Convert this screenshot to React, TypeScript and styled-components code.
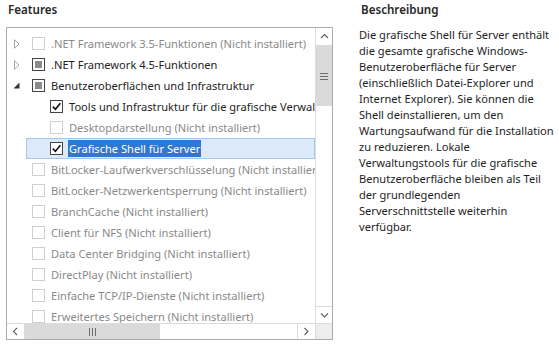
import React from 'react';
import styled, { createGlobalStyle } from 'styled-components';

const GlobalStyle = createGlobalStyle`
	body {
		margin: 0;
		background: #ffffff;
		font-family: 'Noto Sans', 'Open Sans', sans-serif;
		font-size: 11.1px;
		color: #1e1e1e;
	}
`;

type Check = 'none' | 'partial' | 'checked';
type Expander = 'none' | 'collapsed' | 'expanded';

interface Feature {
	level: number;
	expander: Expander;
	check: Check;
	muted?: boolean;
	selected?: boolean;
	label: string;
}

const features: Feature[] = [
	{ level: 0, expander: 'collapsed', check: 'none', muted: true, label: '.NET Framework 3.5-Funktionen (Nicht installiert)' },
	{ level: 0, expander: 'collapsed', check: 'partial', label: '.NET Framework 4.5-Funktionen' },
	{ level: 0, expander: 'expanded', check: 'partial', label: 'Benutzeroberflächen und Infrastruktur' },
	{ level: 1, expander: 'none', check: 'checked', label: 'Tools und Infrastruktur für die grafische Verwaltung' },
	{ level: 1, expander: 'none', check: 'none', muted: true, label: 'Desktopdarstellung (Nicht installiert)' },
	{ level: 1, expander: 'none', check: 'checked', selected: true, label: 'Grafische Shell für Server' },
	{ level: 0, expander: 'none', check: 'none', muted: true, label: 'BitLocker-Laufwerkverschlüsselung (Nicht installiert)' },
	{ level: 0, expander: 'none', check: 'none', muted: true, label: 'BitLocker-Netzwerkentsperrung (Nicht installiert)' },
	{ level: 0, expander: 'none', check: 'none', muted: true, label: 'BranchCache (Nicht installiert)' },
	{ level: 0, expander: 'none', check: 'none', muted: true, label: 'Client für NFS (Nicht installiert)' },
	{ level: 0, expander: 'none', check: 'none', muted: true, label: 'Data Center Bridging (Nicht installiert)' },
	{ level: 0, expander: 'none', check: 'none', muted: true, label: 'DirectPlay (Nicht installiert)' },
	{ level: 0, expander: 'none', check: 'none', muted: true, label: 'Einfache TCP/IP-Dienste (Nicht installiert)' },
	{ level: 0, expander: 'none', check: 'none', muted: true, label: 'Erweitertes Speichern (Nicht installiert)' },
];

const description = [
	'Die grafische Shell für Server enthält',
	'die gesamte grafische Windows-',
	'Benutzeroberfläche für Server',
	'(einschließlich Datei-Explorer und',
	'Internet Explorer). Sie können die',
	'Shell deinstallieren, um den',
	'Wartungsaufwand für die Installation',
	'zu reduzieren. Lokale',
	'Verwaltungstools für die grafische',
	'Benutzeroberfläche bleiben als Teil',
	'der grundlegenden',
	'Serverschnittstelle weiterhin',
	'verfügbar.',
];

const Page = styled.div`
	display: flex;
	padding-left: 6px;
`;

const FeaturesPane = styled.div`
	display: flex;
	flex-direction: column;
	width: 327px;
`;

const PaneTitle = styled.div`
	height: 27px;
	line-height: 20px;
	padding-left: 2px;
	font-size: 11.6px;
	font-weight: 600;
	color: #262626;
`;

const ListBox = styled.div`
	display: grid;
	grid-template-columns: 1fr 17px;
	grid-template-rows: 295px 16px;
	height: 311px;
	border: 1px solid #acacac;
	background: #ffffff;
`;

const Viewport = styled.div`
	overflow: hidden;
	padding-top: 5px;
`;

const Row = styled.div`
	display: flex;
	align-items: center;
	height: 21px;
	white-space: nowrap;
`;

const ExpanderCell = styled.div`
	display: flex;
	align-items: center;
	justify-content: center;
	flex: 0 0 19px;
	height: 21px;
`;

const RowBody = styled.div<{ $selected?: boolean; $level: number }>`
	display: flex;
	align-items: center;
	flex: 1;
	height: 21px;
	box-sizing: border-box;
	padding-left: ${(p) => 5 + p.$level * 18}px;
	border: 1px solid ${(p) => (p.$selected ? '#a5c8ed' : 'transparent')};
	background: ${(p) => (p.$selected ? '#dbe9f9' : 'transparent')};
`;

const Box = styled.div<{ $muted?: boolean }>`
	display: flex;
	align-items: center;
	justify-content: center;
	box-sizing: border-box;
	width: 13px;
	height: 13px;
	flex: 0 0 13px;
	border: 1px solid ${(p) => (p.$muted ? '#cfcfcf' : '#444444')};
	background: #ffffff;
`;

const PartialFill = styled.div`
	width: 7px;
	height: 7px;
	background: #8c8c8c;
`;

const Label = styled.span<{ $muted?: boolean; $selected?: boolean }>`
	margin-left: 5px;
	padding: 0 1px;
	line-height: 17px;
	color: ${(p) => (p.$selected ? '#ffffff' : p.$muted ? '#8a8a8a' : '#1e1e1e')};
	background: ${(p) => (p.$selected ? '#2f78d0' : 'transparent')};
`;

const VScroll = styled.div`
	display: flex;
	flex-direction: column;
	border-left: 1px solid #dcdcdc;
`;

const HScroll = styled.div`
	display: flex;
	border-top: 1px solid #dcdcdc;
`;

const Corner = styled.div`
	border-top: 1px solid #dcdcdc;
	border-left: 1px solid #dcdcdc;
	background: #ededed;
`;

const ArrowButton = styled.div<{ $size: number; $vertical?: boolean }>`
	display: flex;
	align-items: center;
	justify-content: center;
	flex: 0 0 ${(p) => p.$size}px;
	box-sizing: border-box;
	${(p) => (p.$vertical ? 'border-bottom' : 'border-right')}: 1px solid #dcdcdc;
`;

const ArrowButtonEnd = styled(ArrowButton)`
	border: none;
	${(p) => (p.$vertical ? 'border-top' : 'border-left')}: 1px solid #dcdcdc;
`;

const Track = styled.div`
	flex: 1;
	display: flex;
	background: #ffffff;
`;

const Thumb = styled.div<{ $vertical?: boolean; $length: number }>`
	display: flex;
	align-items: center;
	justify-content: center;
	box-sizing: border-box;
	background: #dadada;
	${(p) => (p.$vertical ? `height: ${p.$length}px; width: 100%;` : `width: ${p.$length}px; height: 100%;`)}
`;

const DescriptionPane = styled.div`
	margin-left: 26px;
	width: 200px;
`;

const DescriptionLine = styled.div`
	line-height: 16px;
	white-space: nowrap;
	color: #1e1e1e;
`;

const Triangle: React.FC<{ kind: Expander }> = ({ kind }) => {
	if (kind === 'collapsed') {
		return (
			<svg width="6" height="10" viewBox="0 0 6 10">
				<path d="M0.5 0.8 L5 5 L0.5 9.2 Z" fill="none" stroke="#a6a6a6" strokeWidth="1" />
			</svg>
		);
	}
	if (kind === 'expanded') {
		return (
			<svg width="7" height="7" viewBox="0 0 7 7">
				<path d="M6.5 0.5 L6.5 6.5 L0.5 6.5 Z" fill="#333333" />
			</svg>
		);
	}
	return null;
};

const CheckMark = () => (
	<svg width="11" height="11" viewBox="0 0 11 11">
		<path d="M1.8 5.6 L4.4 8.2 L9.4 2.2" fill="none" stroke="#111111" strokeWidth="1.6" />
	</svg>
);

const Grip: React.FC<{ vertical?: boolean }> = ({ vertical }) =>
	vertical ? (
		<svg width="8" height="7" viewBox="0 0 8 7">
			<path d="M0 0.5 H8 M0 3.5 H8 M0 6.5 H8" stroke="#6e6e6e" strokeWidth="1" />
		</svg>
	) : (
		<svg width="7" height="8" viewBox="0 0 7 8">
			<path d="M0.5 0 V8 M3.5 0 V8 M6.5 0 V8" stroke="#6e6e6e" strokeWidth="1" />
		</svg>
	);

const Chevron: React.FC<{ dir: 'up' | 'down' | 'left' | 'right' }> = ({ dir }) => {
	const paths = {
		up: 'M1 5 L4.5 1.5 L8 5',
		down: 'M1 1.5 L4.5 5 L8 1.5',
		left: 'M5 1 L1.5 4.5 L5 8',
		right: 'M1.5 1 L5 4.5 L1.5 8',
	};
	const horizontal = dir === 'left' || dir === 'right';
	return (
		<svg width={horizontal ? 7 : 9} height={horizontal ? 9 : 7} viewBox={horizontal ? '0 0 7 9' : '0 0 9 7'}>
			<path d={paths[dir]} fill="none" stroke="#606060" strokeWidth="1.1" />
		</svg>
	);
};

const FeatureRow: React.FC<{ item: Feature }> = ({ item }) => (
	<Row>
		<ExpanderCell>
			<Triangle kind={item.expander} />
		</ExpanderCell>
		<RowBody $selected={item.selected} $level={item.level}>
			<Box $muted={item.muted}>
				{item.check === 'partial' && <PartialFill />}
				{item.check === 'checked' && <CheckMark />}
			</Box>
			<Label $muted={item.muted} $selected={item.selected}>
				{item.label}
			</Label>
		</RowBody>
	</Row>
);

export default function App() {
	return (
		<>
			<GlobalStyle />
			<Page>
				<FeaturesPane>
					<PaneTitle>Features</PaneTitle>
					<ListBox>
						<Viewport>
							{features.map((f) => (
								<FeatureRow key={f.label} item={f} />
							))}
						</Viewport>
						<VScroll>
							<ArrowButton $size={18} $vertical>
								<Chevron dir="up" />
							</ArrowButton>
							<Track>
								<Thumb $vertical $length={60}>
									<Grip vertical />
								</Thumb>
							</Track>
							<ArrowButtonEnd $size={17} $vertical>
								<Chevron dir="down" />
							</ArrowButtonEnd>
						</VScroll>
						<HScroll>
							<ArrowButton $size={18}>
								<Chevron dir="left" />
							</ArrowButton>
							<Track>
								<Thumb $length={135}>
									<Grip />
								</Thumb>
							</Track>
							<ArrowButtonEnd $size={18}>
								<Chevron dir="right" />
							</ArrowButtonEnd>
						</HScroll>
						<Corner />
					</ListBox>
				</FeaturesPane>
				<DescriptionPane>
					<PaneTitle>Beschreibung</PaneTitle>
					{description.map((line) => (
						<DescriptionLine key={line}>{line}</DescriptionLine>
					))}
				</DescriptionPane>
			</Page>
		</>
	);
}
